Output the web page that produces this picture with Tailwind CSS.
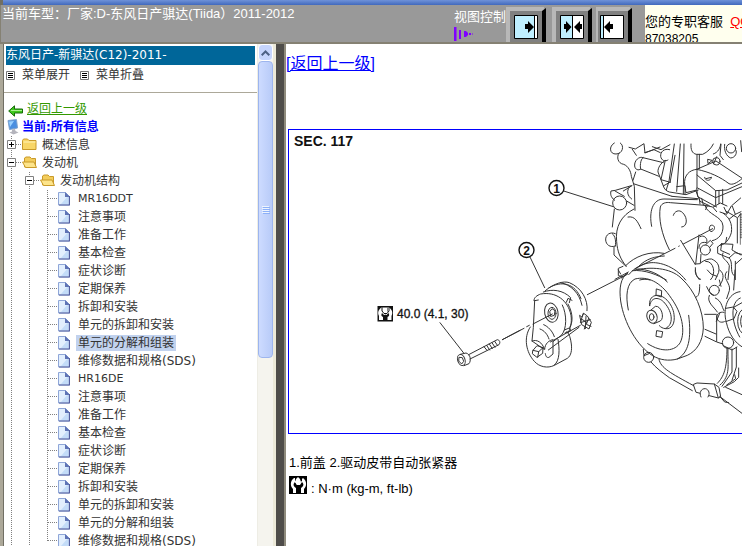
<!DOCTYPE html>
<html lang="zh-CN">
<head>
  <meta charset="UTF-8">
  <meta name="viewport" content="width=device-width, initial-scale=1.0">
  <title>东风日产骐达 2011-2012</title>
  <script src="https://cdn.jsdelivr.net/npm/@tailwindcss/browser@4"></script>
</head>
<body class="h-screen flex flex-col overflow-hidden bg-white text-black text-[13px] leading-4 font-['Liberation_Sans','Noto_Sans_CJK_SC',sans-serif]">
  <div class="h-[5px] shrink-0 bg-linear-to-b from-[#6f92d8] to-[#4169bd] border-l-3 border-[#716f64]"></div>

  <header class="h-[39px] shrink-0 flex bg-[#999999] border-b-2 border-l border-b-[#858173] border-l-[#858173] overflow-hidden">
    <p class="flex-1 pl-px pt-px text-white whitespace-nowrap">当前车型：厂家:D-东风日产骐达(Tiida）2011-2012</p>
    <div class="w-[52px] shrink-0 pt-1 text-white whitespace-nowrap">
      视图控制
      <svg class="block mt-0.5" width="20" height="14" viewBox="0 0 20 14" fill="#8000ff">
        <path d="M0 0h2.500v14H0zM5 3h2v9H5zM10 4h2l2 2v2l-2 2h-2zM15 6h2v2h-2zM18 6.500h1v1h-1z"/>
      </svg>
    </div>
    <div class="flex shrink-0 items-end mr-[9px]">
      <button aria-label="展开左栏" class="w-10 h-[35px]">
        <svg class="block" width="40" height="35" viewBox="0 0 40 35">
          <path fill="#b8b8b8" d="M0 0h38v35H0z"/><path fill="#808080" d="M4 4h32v31H4z"/><path fill="#000" d="M36 4l4-3v34h-4z"/>
          <path fill="#fff" stroke="#000" d="M8.500 8.500h23v23h-23z"/><path fill="#bfefff" d="M9 9h19v22H9z"/><path stroke="#000" d="M28.500 9v22"/>
          <path d="M19 17h3v-3l6 6-6 6v-4h-3z"/>
        </svg>
      </button>
      <button aria-label="左右平分" class="w-10 h-[35px] ml-1.5">
        <svg class="block" width="40" height="35" viewBox="0 0 40 35">
          <path fill="#b8b8b8" d="M0 0h38v35H0z"/><path fill="#808080" d="M4 4h32v31H4z"/><path fill="#000" d="M36 4l4-3v34h-4z"/>
          <path fill="#fff" stroke="#000" d="M8.500 8.500h23v23h-23z"/><path fill="#bfefff" d="M9 9h11v22H9z"/><path stroke="#000" d="M20.500 9v22"/>
          <path d="M12 17h2v-3l5.500 6-5.500 6v-4h-2zM30 17h-2v-3l-6 6 6 6v-4h2z"/>
        </svg>
      </button>
      <button aria-label="收起左栏" class="w-10 h-[35px] ml-1">
        <svg class="block" width="40" height="35" viewBox="0 0 40 35">
          <path fill="#b8b8b8" d="M0 0h34v35H0z"/><path fill="#808080" d="M2 4h30v31H2z"/><path fill="#000" d="M32 4l4-3v34h-4z"/>
          <path fill="#fff" stroke="#000" d="M4.500 8.500h23v23h-23z"/><path fill="#bfefff" d="M5 9h2v22H5z"/><path stroke="#000" d="M7.500 9v22"/>
          <path d="M17 17h-3v-3l-6 6 6 6v-4h3z"/>
        </svg>
      </button>
    </div>
    <div class="w-[97px] shrink-0 bg-[#ffffee] pt-2 leading-[17px] whitespace-nowrap overflow-hidden">
      您的专职客服 &nbsp;<a href="#qq" class="text-[#ff0000] underline">QQ</a>
      <div class="text-xs leading-[18px]">87038205</div>
    </div>
  </header>

  <div class="flex-1 min-h-0 flex">
    <aside class="w-[276px] shrink-0 flex border-l-3 border-[#aca899]">
      <div class="flex-1 min-w-0 overflow-hidden border-l border-[#716f64] text-[#333333] text-xs font-['DejaVu_Sans','Noto_Sans_CJK_SC',sans-serif]">
        <h1 class="mt-0.5 mx-0.5 h-[19px] leading-[18px] bg-[#006699] text-white whitespace-nowrap">东风日产-新骐达(C12)-2011-</h1>
        <div class="flex items-center h-5 pl-0.5 mb-[7px]">
          <button class="flex items-center gap-[7px] w-[74px]">
            <svg width="9" height="9" viewBox="0 0 9 9"><path fill="#fff" stroke="#777" d="M.5.500h8v8h-8z"/><path stroke="#000" d="M2 2.500h5M2 4.500h5M2 6.500h5"/></svg>
            菜单展开
          </button>
          <button class="flex items-center gap-[7px] w-[74px]">
            <svg width="9" height="9" viewBox="0 0 9 9"><path fill="#fff" stroke="#777" d="M.5.500h8v8h-8z"/><path stroke="#000" d="M2 2.500h5M2 4.500h5M2 6.500h5"/></svg>
            菜单折叠
          </button>
        </div>
        <hr class="border-[#aca899] mb-1.5">
        <a href="#up" class="flex items-center gap-1 h-[19px] pl-1 leading-[18px] text-[#339900]">
          <svg class="mt-1" width="15" height="12" viewBox="0 0 15 12"><path fill="#3fc81e" stroke="#176b08" d="M.7 6L6.500.8V4h8v4h-8v3.200z"/><path stroke="#a8f08e" d="M3 5.500h11"/></svg>
          <span class="underline">返回上一级</span>
        </a>
        <div class="flex items-center gap-[3px] h-[18px] pl-[3px] font-bold text-[#0000ff]">
          <svg width="12" height="16" viewBox="0 0 12 16"><path fill="#4a8fe0" stroke="#7ea3cf" d="M1 1.500L9.500.6l1 8.400-8 1.500z"/><path fill="#9bd2ff" d="M2 2.500l5-.5-4 6z"/><path fill="#b4b4bc" d="M5 10.500l3-.5.5 2 3 1.500-5 2-4-2 2.500-1z"/></svg>
          当前:所有信息
        </div>
        <ul id="tree"></ul>
      </div>

      <div class="w-4 shrink-0 flex flex-col bg-[#f5f4ee] border-l border-[#eeede5]">
        <div class="h-[17px] shrink-0 rounded-sm border border-white bg-[#c6d5fd] flex items-center justify-center">
          <svg width="9" height="6" viewBox="0 0 9 6" fill="none" stroke="#4d6185" stroke-width="2"><path d="M.7 5.300l3.800-3.800 3.800 3.800"/></svg>
        </div>
        <div class="h-[297px] shrink-0 rounded-sm border border-[#9db5ee] bg-linear-to-r from-[#cddbff] to-[#b8cbf8] flex items-center justify-center">
          <svg width="8" height="8" viewBox="0 0 8 8"><path stroke="#eef4fe" d="M0 .500h7M0 2.500h7M0 4.500h7M0 6.500h7"/><path stroke="#8cb0f8" d="M1 1.500h7M1 3.500h7M1 5.500h7M1 7.500h7"/></svg>
        </div>
      </div>
      <div class="w-[3px] shrink-0 bg-[#ece9d8]"></div>
    </aside>
    <div class="w-2 shrink-0 bg-[#4f4d4a]"></div>

    <main class="flex-1 min-w-0 overflow-hidden border-l-2 border-[#8f8b7d]">
      <a href="#up" class="block w-fit mt-[10px] text-base leading-5 text-[#0000ff] underline">[返回上一级]</a>
      <a href="#figure" class="block w-[642px] mt-[55px] ml-0.5 border border-[#0000ff]">
        <svg class="block" width="640" height="303" viewBox="289 130 640 303" role="img" aria-label="SEC. 117">
          <g fill="none" stroke="#333" stroke-width="3" stroke-linecap="round" stroke-linejoin="round">
            <!-- front cover and engine block -->
            <g transform="translate(500 120) scale(.33333)">
              <path d="M191 213L340 260M90 411L134 503"/>
              <path d="M343 69c-18 10-14 34 5 33 20 0 26-25 13-33M357 99c-8 12-4 31 14 34 14 5 22 22 23 36l9 30 2 72"/>
              <path d="M387 82l19 5 26-16 3 28 45-18M397 88l12 18M434 98l28-9 19 9M457 80l26 9 27-15"/>
              <path d="M429 113c-11-6-27 9-25 25 1 11 12 15 18 9M429 113l61 15M422 147l55 22M429 113c-9 6-9 29-7 34"/>
              <path d="M509 89c-17-5-28 7-27 20 2 13 14 17 22 11M497 121c-15 7-24 23-23 35l16 42c3 9 8 15 18 18l50 8 37-14M495 125l-12 54 28 8M490 198l22-13"/>
              <path d="M523 72l-16 112-8 25M541 72l-11 142M552 72l-2 150M530 200l25-3v25M525 106l-14 77M407 156l-8 25M400 191l116 38"/>
              <path d="M573 72c-1 17 3 28 16 31h19c15-7 25-17 32-31M591 103v43M598 103v43M640 102c15-5 21-19 22-30M663 73l-3 33 10 13"/>
              <circle cx="693" cy="85" r="14"/><circle cx="649" cy="124" r="11"/><path d="M674 73c-3 18 5 36 18 41 14-1 21-16 15-25M722 62l3 33M623 119l1 12 12-9zM641 131l9-21"/>
              <!-- mount bracket -->
              <path d="M590 148l58-25 80 53M590 148c40 8 72 24 97 43 10 5 24-2 39-15M591 148v55l56 30 79-33M647 212v42M657 212v39M668 208v43M591 165l56 47 34-2 45-21M614 172c2 14 20 10 20 1M618 176l16-4M590 148c-22 2-39 18-36 47l4 23 29-7"/>
              <path d="M590 204l3 26 57 31M587 211l13 33 28 13M516 229l77 7M598 236l2 16M605 235l5 20 28 6 12 14M622 257l-5 12M640 261l21-12 20 9M660 276l20 7 14-25 28-24M672 262l8 17M697 259l9 24 17-8M706 283l-18 14"/>
              <path d="M455 319c-9-44 3-82 37-82l100 2M508 389c-24-47-33-95-27-128 4-12 17-15 30-13l104 8M520 286c3-12 17-19 28-8 17 17 13 43-3 43M542 361l44 73"/>
              <path d="M615 257c8 28 52 31 54 61 1 25-14 40-32 44M670 280c18 13 28 30 24 58-6 21-18 34-32 38M679 274l33 19v76M723 280l-9 12"/>
              <path d="M631 317c-5 6-4 15 2 18 12-3 14-16 5-19-4-1-6 0-7 1M638 326L550 372M538 378l-2 1M525 385L405 446M385 456l-40 22"/>
              <!-- left flange -->
              <path d="M344 241c-13-10-13-20-11-28l13-2 48-14M345 213l28 16M388 202c-9 10-6 26 7 35M370 213l26-16M343 267l-6 54M342 381v24l34 32M402 267c-38 19-57 53-52 98 2 29 11 53 29 74M384 291c21-4 29 14 39 35M380 243l22 13"/>
              <circle cx="359" cy="249" r="21"/><path d="M346 341c-15-7-30 3-29 19 1 14 13 24 29 18M337 341c10 8 11 24 9 37"/>
              <path d="M369 439l-14 6v22l14 3M377 437c27-28 72-45 115-37M386 464c12-14 31-29 55-34 30-8 82 6 116 50M412 443c28-30 55-33 81-35M397 452c37-4 77 13 102 28M419 480c9-3 23-3 31 0"/>
              <path d="M600 350c12-7 24 5 20 18-18-4-24 6-23 17M597 345l-10 87 14-1 2-28"/>
              <circle cx="616" cy="390" r="15"/><path d="M617 374l14-13 8 9-9 11M586 443c-1 15 4 28 12 36M617 424c25-2 32 39 15 55M604 427c10-7 21-11 31-10 14 7 25 15 21 40l-10 22"/>
              <path d="M653 382v18l34 14 18-16 20 5M665 371l-3 20 27 12M665 371l34 2-3 17 27 15M652 382l13-11M680 352l-3 16M669 399c-8 17 13 20 19 38l-4 42M688 414c13 14 0 39 13 52M706 424v55M726 415l-19 17"/>
              <path stroke-width="2" d="M721 283h30M721 288h30M721 293h30M721 298h30M721 303h30M721 308h30M721 313h30M721 318h30M721 323h30M721 328h30M721 333h30M721 338h30M721 343h30M721 348h30M721 353h30M721 283v90"/>
            </g>
            <!-- belt tensioner, pulley, lower case -->
            <g transform="translate(500 270) scale(.33333)">
              <path d="M7 209l65-34M80 170l8-4M99 162l58-30M262 74L382 13"/>
              <path d="M102 92c-1-9 9-16 20-20 45-8 82 18 91 64 3 22-1 38-9 53M130 66c27-10 59-6 82 17l-4 15M136 62c26-22 55-30 72-24 37 15 57 52 53 84M146 54c38-24 80-14 97 32M199 97l5-12 12 6M182 38c30 6 56 30 64 68"/>
              <path d="M104 92l11-2M104 92l-4 80-4 41 35 24M187 105c14 29 14 72-3 91l-25 19M204 102c17 31 14 58 5 70M193 180l15-6 5 8-18 7"/>
              <ellipse cx="154" cy="128" rx="20" ry="29" transform="rotate(-12 154 128)"/><ellipse cx="156" cy="130" rx="12" ry="18"/><path d="M150 124l6-8 9 6-2 14-10 3zM120 177c13 4 23 17 27 30M131 164c13 5 27 20 32 36M151 216l90-50M145 240l92-68M134 238c0-17 14-28 25-29"/>
              <path d="M239 137l6 27 22 13 7-20-12-19-11-8-5 10zM250 130l-9 28 30-9M244 147l15 9-6 21M258 139l-2 37M266 145l-7 18 14 6"/>
              <path d="M91 171c-22 32-12 77 12 103 15 17 40 22 60 12l39-21c12-8 14-26 12-43-2-16-6-31-13-37M96 213c15-6 31 4 37 24M174 208c5 29 6 65-11 77M159 215v37l-12 10c-7 2-10-3-11-11"/>
              <path d="M99 241l12-14 18 6-1 17-17 12-13-10zM99 241l17 4 13-12M116 245l-3 17"/>
              <path d="M383 9c-22 14-26 47-21 84 10 66 49 135 96 164 21 13 48 17 74 10l30-11c28-13 46-41 48-82 0-50-24-112-67-150C510-8 450-10 405 0M532 267c34-18 43-61 34-131"/>
              <path d="M385 120c-9-43-5-81 20-93 36-9 76 7 109 58 32 44 43 98 27 132-15 27-55 32-98 4M408-3c36 0 70 14 94 39M362 12l-7-12M383 9l-19 15"/>
              <path d="M470 57l15 5-1 19-15-5zM471 182l17 3-3 17-16-3zM449 107c-2-15 4-27 16-30 25-7 53 25 57 56 4 28-7 45-25 43-9-1-14-4-19-9M449 107c5-29 30-26 45-8 25 29 27 66 3 76"/>
              <ellipse cx="456" cy="140" rx="15" ry="20" transform="rotate(-20 456 140)"/><ellipse cx="455" cy="141" rx="7" ry="10"/><path d="M452 121l14-12c18-3 29 35 15 44l-19 8"/>
              <path d="M430 238l2 19 15-6"/><circle cx="446" cy="262" r="15"/><path d="M453 276c15 18 32 30 55 47l69 39M477 268c5 26 34 41 104 79"/>
              <path d="M581 343l10-4 52 3 12 42-66-17zM643 342l14 10 5 28-7 4M660 345c34-29 22-61 24-110M652 340c20-20 29-45 29-107M696 237v69l-30 43M709 232v59l-13 40M680 345l27-19-3-12M671 352l32-17 13-13V294"/><path fill="#fff" d="M603 381c-7-13 1-26 13-25 11 2 15 16 8 25"/>
              <path d="M660 380l66 50 80 60M660 380l14 16 12 2M677 352l49 22 80 36M614 133h35M615 178l33 14M615 199l33 16M650 137v79l19 6"/>
              <path d="M586 0c-2 15 9 26 16 28M599 44c0 19-1 34-10 37M622 0l11 12 18 7M659 0c17 11 11 34-2 48M628 76c-9 21 13 33 24 50M646 84c20 10 18 24 26 38M680 5c-16 20 14 34 8 57l-8 24M705 0l-4 60M658 30l5 19"/>
              <circle cx="643" cy="61" r="15"/><path d="M672 127c-13-3-23 5-21 16 1 11 11 17 22 12M620 50l8 16 13 10M649 154l10-24M670 227l26 13 15-9"/><circle cx="684" cy="218" r="17"/>
              <path d="M720 65c-36 4-53 50-41 92 8 37 27 62 48 74M721 84c-30 12-29 69-2 117M678 115l22-4 11 13-9 22-25 9M701 112l25-14"/>
              <ellipse cx="735" cy="154" rx="22" ry="38"/><ellipse cx="735" cy="154" rx="13" ry="25"/>
            </g>
            <!-- bolt -->
            <g transform="translate(280 270) scale(.33333)">
              <path d="M480 158l71 91M667 209l53-28M566 254l86-45c7 1 10 8 5 15l-87 43M612 230l9 11M620 226l9 14M628 222l9 14M636 218l9 14M644 214l9 13M541 253l17-4c14 4 16 23 9 32l-15 6"/>
              <ellipse cx="544" cy="270" rx="11" ry="17" transform="rotate(-18 544 270)"/><path d="M538 262l9 1 4 11-6 8-8-8z"/>
            </g>
          </g>
          <g fill="#fff" stroke="#111" stroke-width="1.400"><circle cx="556.500" cy="188" r="7.500"/><circle cx="526.500" cy="250" r="7.500"/></g>
          <path fill="#111" d="M377.500 306h15.500v15.500h-15.500z"/>
          <path fill="#fff" d="M379 320v-4c-2-4 0-7 3-9l1 1v4l2 2h1l-1 1h-1l-2-2c-1 2-1 3 1 4v3zM391.500 320v-4c2-4 0-7-3-9l-1 1v4l-2 2h-1l1 1h1l2-2c1 2 1 3-1 4v3zM382.500 307.500h5.500v4l-2 2h-2l-1.500-2z"/>
          <path fill="none" stroke="#111" d="M382 307v4l2 2.500h3l2-2.500v-4"/>
          <g fill="#111" font-family="Liberation Sans, sans-serif">
            <text x="294" y="146" font-size="14" font-weight="bold">SEC. 117</text>
            <text x="397" y="318" font-size="12" stroke="#111" stroke-width=".3">40.0 (4.1, 30)</text>
            <text x="556.500" y="192.500" font-size="12" font-weight="bold" text-anchor="middle">1</text>
            <text x="526.500" y="254.500" font-size="12" font-weight="bold" text-anchor="middle">2</text>
          </g>
        </svg>
      </a>
      <p class="mt-[21px] ml-[3px] leading-4 whitespace-nowrap">1.前盖 2.驱动皮带自动张紧器</p>
      <p class="flex gap-1 mt-[5px] ml-[3px] leading-[26px] whitespace-nowrap">
        <svg width="18" height="18" viewBox="0 0 18 18"><path d="M0 0h18v18H0z"/><path fill="#fff" d="M5 2C1 5 1 10 4 13v4h3v-5c-3-2-3-4-1-6l2 3h3l2-3c2 2 2 4-1 6v5h3v-4c3-3 3-8-1-11l-1 1v2l-3 2H9L6 5V2z"/><path fill="#fff" d="M7 3l2-2 2 2 1 3-2 3H8L6 6z"/></svg>
        : N·m (kg-m, ft-lb)
      </p>
    </main>
  </div>

  <script>
    // guides: v = line, t = branch, l = last branch, + / - = folder toggle
    const rows = [
      ["+", "folder", "概述信息"],
      ["-", "open", "发动机"],
      ["v-", "open", "发动机结构"],
      ["vvt", "file", "MR16DDT"],
      ["vvt", "file", "注意事项"],
      ["vvt", "file", "准备工作"],
      ["vvt", "file", "基本检查"],
      ["vvt", "file", "症状诊断"],
      ["vvt", "file", "定期保养"],
      ["vvt", "file", "拆卸和安装"],
      ["vvt", "file", "单元的拆卸和安装"],
      ["vvt", "file", "单元的分解和组装", true],
      ["vvt", "file", "维修数据和规格(SDS)"],
      ["vvt", "file", "HR16DE"],
      ["vvt", "file", "注意事项"],
      ["vvt", "file", "准备工作"],
      ["vvt", "file", "基本检查"],
      ["vvt", "file", "症状诊断"],
      ["vvt", "file", "定期保养"],
      ["vvt", "file", "拆卸和安装"],
      ["vvt", "file", "单元的拆卸和安装"],
      ["vvt", "file", "单元的分解和组装"],
      ["vvl", "file", "维修数据和规格(SDS)"],
    ];

    const box = `<path fill="#fff" stroke="#808080" stroke-dasharray="none" d="M3.500 4.500h8v8h-8z"/>`;
    const guides = {
      "v": `<path d="M7.500 0v18"/>`,
      "t": `<path d="M7.500 0v18M8 8.500h10"/>`,
      "l": `<path d="M7.500 0v9M8 8.500h10"/>`,
      "+": `<path d="M7.500 0v18M12 8.500h6"/>${box}<path stroke="#000" stroke-dasharray="none" d="M5 8.500h5M7.500 6v5"/>`,
      "-": `<path d="M7.500 0v18M12 8.500h6"/>${box}<path stroke="#000" stroke-dasharray="none" d="M5 8.500h5"/>`,
    };
    const icons = {
      folder: `<path fill="#f8d667" stroke="#c99a2a" d="M.5 4.500l1-1.500h4l1.500 1.500h7v9H.5z"/><path stroke="#fff3b8" d="M1.500 6h12"/>`,
      open: `<path fill="#f3cd5c" stroke="#c99a2a" d="M2.500 13V4L4 3h4l1.500 1.500h4V13z"/><path fill="#fde48a" stroke="#c99a2a" d="M.5 8h11.500l2.500 5.500h-11z"/>`,
      file: `<path fill="#e2effd" stroke="#8fa6d8" d="M.5 2.500h7l3.500 3.500v9H.5z"/><path fill="#c3dcf8" d="M3 14l7-8v8z"/><path fill="#5f74b5" d="M7 2l5 5H7z"/><path stroke="#5560a0" d="M1 15h11M11.500 6v9"/>`,
    };

    document.getElementById("tree").innerHTML = rows.map(([lines, icon, label, active]) => `
      <li class="flex h-[18px] items-center">
        ${[...lines].map(g => `<svg class="shrink-0" width="18" height="18" fill="none" stroke="#808080" stroke-dasharray="1 1">${guides[g]}</svg>`).join("")}
        <svg class="shrink-0" width="18" height="18" fill="none">${icons[icon]}</svg>
        <a href="#" class="px-0.5 leading-4 whitespace-nowrap ${active ? "bg-[#c1d2ee]" : ""} ${/^[A-Z0-9]+$/.test(label) ? "text-[11px]" : ""}">${label}</a>
      </li>`).join("");
  </script>
</body>
</html>
